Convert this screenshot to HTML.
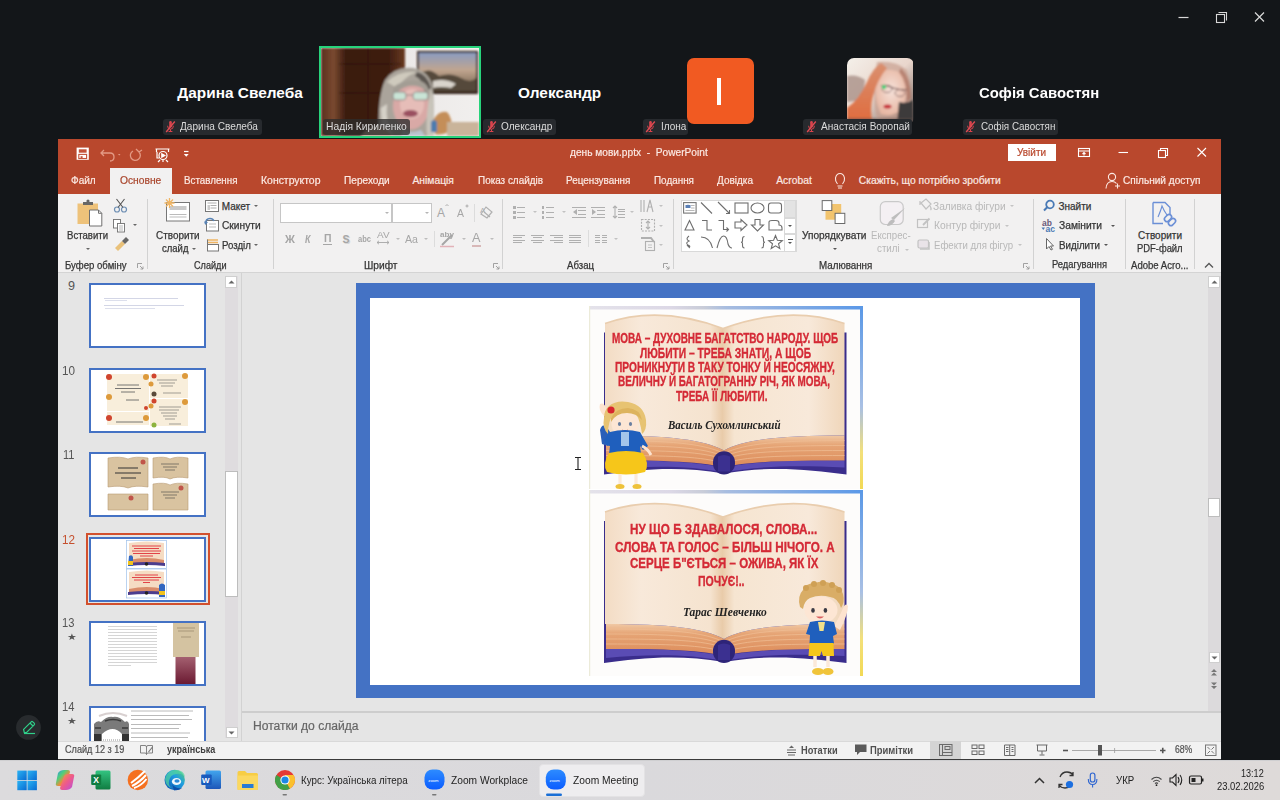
<!DOCTYPE html><html><head><meta charset="utf-8"><style>
*{margin:0;padding:0;box-sizing:border-box}
html,body{width:1280px;height:800px;overflow:hidden;background:#131619;font-family:"Liberation Sans",sans-serif}
.a{position:absolute}
.t{position:absolute;white-space:pre;line-height:1}
svg{position:absolute;overflow:visible}
</style></head><body>
<svg style="left:1170px;top:5px" width="110" height="26">
  <line x1="8.5" y1="12.5" x2="18.5" y2="12.5" stroke="#d8d8d8" stroke-width="1.2"/>
  <rect x="46.5" y="9.5" width="8" height="8" fill="none" stroke="#d8d8d8" stroke-width="1.1"/>
  <path d="M48.5 7.5 H56.5 V15.5" fill="none" stroke="#d8d8d8" stroke-width="1.1"/>
  <path d="M85 7.5 L94 16.5 M94 7.5 L85 16.5" stroke="#d8d8d8" stroke-width="1.2"/>
</svg>
<div class="t" style="left:177.30px;top:85.26px;font-size:15.4px;color:#ffffff;font-weight:bold;font-style:normal;">Дарина Свелеба</div>
<div class="t" style="left:518.00px;top:85.26px;font-size:15.4px;color:#ffffff;font-weight:bold;font-style:normal;">Олександр</div>
<div class="t" style="left:979.40px;top:85.26px;font-size:15.4px;color:#ffffff;font-weight:bold;font-style:normal;transform:scaleX(0.968);transform-origin:0 0;">Софія Савостян</div>
<div class="a" style="left:319px;top:46px;width:162px;height:92px;border:2px solid #27d37b;overflow:hidden;background:#e9e6e4">
 <svg width="158" height="88" viewBox="0 0 158 88" style="left:0;top:0">
  <defs>
   <linearGradient id="wood" x1="0" x2="1"><stop offset="0" stop-color="#5a3020"/><stop offset="0.15" stop-color="#7a4a30"/><stop offset="0.3" stop-color="#3a1a0e"/><stop offset="0.8" stop-color="#3d1d10"/><stop offset="1" stop-color="#6a3a22"/></linearGradient>
   <linearGradient id="wall" x1="0" x2="1"><stop offset="0" stop-color="#e6e2e0"/><stop offset="1" stop-color="#f1efee"/></linearGradient>
   <filter id="bl2" x="-5%" y="-5%" width="110%" height="110%"><feGaussianBlur stdDeviation="0.9"/></filter>
   <linearGradient id="paint" x1="0" y1="0" x2="0" y2="1"><stop offset="0" stop-color="#8b9cc0"/><stop offset="0.45" stop-color="#c0a58f"/><stop offset="1" stop-color="#6a5a45"/></linearGradient>
  </defs>
  <rect x="0" y="0" width="158" height="88" fill="url(#wall)"/>
  <g filter="url(#bl2)">
  <rect x="0" y="0" width="84" height="88" fill="url(#wood)"/>
  <path d="M47 0 V72 M18 16 H80 M18 45 H80" stroke="#24110a" stroke-width="1" opacity="0.6"/>
  <rect x="96" y="3" width="61" height="43" fill="#3a2a20"/>
  <rect x="98" y="5" width="57" height="38" fill="url(#paint)"/>
  <path d="M98 26 Q108 18 118 28 Q130 24 140 30 T155 30 V43 H98Z" fill="#54483a"/>
  <path d="M112 33 Q125 30 135 36 L130 40 Q120 38 112 40Z" fill="#d9d4cc"/>
  <path d="M58 88 Q56 50 64 32 Q74 18 92 20 Q106 22 111 36 Q114 54 112 88Z" fill="#aaa49b"/>
  <path d="M66 34 Q78 22 96 24 Q84 28 76 40Z" fill="#cfcabd"/>
  <path d="M96 24 Q106 26 110 40 L104 44 Q102 32 94 28Z" fill="#5a5550"/>
  <path d="M60 60 Q60 80 66 88 H72 Q64 74 66 56Z" fill="#d6d2c8"/>
  <path d="M40 88 Q50 76 62 78 L72 88Z" fill="#b49c84"/>
  <ellipse cx="90" cy="58" rx="18" ry="23.5" fill="#d9a9a6"/>
  <ellipse cx="91" cy="56" rx="12" ry="15" fill="#e6bdb8"/>
  <path d="M72 40 Q82 30 100 33 Q108 36 108 46 Q100 36 88 38 Q78 40 72 50Z" fill="#a39d94"/>
  <rect x="72" y="44" width="13" height="8" rx="3" fill="#c9e4d6" stroke="#8a8080" stroke-width="0.9"/>
  <rect x="92" y="44" width="15" height="8" rx="3" fill="#c9e4d6" stroke="#8a8080" stroke-width="0.9"/>
  <path d="M85 47 H92" stroke="#8a8080" stroke-width="0.9"/>
  <ellipse cx="89.5" cy="65.5" rx="7.5" ry="3.5" fill="#9a5060"/>
  <path d="M82 82 Q90 86 100 82 L104 88 H80Z" fill="#b9c4cf"/>
  <path d="M106 88 Q104 70 110 40 Q114 60 113 88Z" fill="#c8c4ba"/>
  <path d="M112 72 Q118 62 126 64 Q132 70 130 82 Q122 88 114 86Z" fill="#c48e58"/>
  <path d="M110 74 Q113 70 116 74 L116 84 L110 84Z" fill="#4e7cae"/>
  <rect x="126" y="74" width="32" height="14" fill="#c9b49a"/>
  </g>
 </svg></div>
<div class="a" style="left:322.7px;top:118.5px;width:87.30000000000001px;height:16.0px;background:rgba(45,45,45,0.78);border-radius:3px"></div><div class="t" style="left:325.50px;top:121.90px;font-size:10.4px;color:#dcdcdc;font-weight:normal;font-style:normal;transform:scaleX(0.989);transform-origin:0 0;">Надія Кириленко</div>
<div class="a" style="left:162.7px;top:118.5px;width:99.30000000000001px;height:16.0px;background:#272a2e;border-radius:3px"></div><svg style="left:164.2px;top:120.0px" width="13" height="13" viewBox="0 0 13 13"><path d="M5.2 2.2 Q5.2 1 6.5 1 Q7.8 1 7.8 2.2 V6.3 Q7.8 7.6 6.5 7.6 Q5.2 7.6 5.2 6.3 Z" fill="#d9434c"/><path d="M3.6 5.8 Q3.6 9.2 6.5 9.2 Q9.4 9.2 9.4 5.8 M6.5 9.2 V11.5 M4.6 11.5 H8.4" fill="none" stroke="#d9434c" stroke-width="1"/><line x1="2.2" y1="12" x2="10.8" y2="1.5" stroke="#e04a52" stroke-width="1.4"/></svg><div class="t" style="left:180.30px;top:121.90px;font-size:10.4px;color:#dcdcdc;font-weight:normal;font-style:normal;transform:scaleX(0.970);transform-origin:0 0;">Дарина Свелеба</div>
<div class="a" style="left:483.4px;top:118.5px;width:72.20000000000005px;height:16.0px;background:#272a2e;border-radius:3px"></div><svg style="left:484.9px;top:120.0px" width="13" height="13" viewBox="0 0 13 13"><path d="M5.2 2.2 Q5.2 1 6.5 1 Q7.8 1 7.8 2.2 V6.3 Q7.8 7.6 6.5 7.6 Q5.2 7.6 5.2 6.3 Z" fill="#d9434c"/><path d="M3.6 5.8 Q3.6 9.2 6.5 9.2 Q9.4 9.2 9.4 5.8 M6.5 9.2 V11.5 M4.6 11.5 H8.4" fill="none" stroke="#d9434c" stroke-width="1"/><line x1="2.2" y1="12" x2="10.8" y2="1.5" stroke="#e04a52" stroke-width="1.4"/></svg><div class="t" style="left:500.90px;top:121.90px;font-size:10.4px;color:#dcdcdc;font-weight:normal;font-style:normal;transform:scaleX(0.968);transform-origin:0 0;">Олександр</div>
<div class="a" style="left:687px;top:58.3px;width:67px;height:66px;background:#f15a22;border-radius:7px"></div>
<div class="a" style="left:717.4px;top:78.4px;width:3.4px;height:26.3px;background:#fff"></div>
<div class="a" style="left:642.8px;top:118.5px;width:45.60000000000002px;height:16.0px;background:#272a2e;border-radius:3px"></div><svg style="left:644.3px;top:120.0px" width="13" height="13" viewBox="0 0 13 13"><path d="M5.2 2.2 Q5.2 1 6.5 1 Q7.8 1 7.8 2.2 V6.3 Q7.8 7.6 6.5 7.6 Q5.2 7.6 5.2 6.3 Z" fill="#d9434c"/><path d="M3.6 5.8 Q3.6 9.2 6.5 9.2 Q9.4 9.2 9.4 5.8 M6.5 9.2 V11.5 M4.6 11.5 H8.4" fill="none" stroke="#d9434c" stroke-width="1"/><line x1="2.2" y1="12" x2="10.8" y2="1.5" stroke="#e04a52" stroke-width="1.4"/></svg><div class="t" style="left:660.60px;top:121.90px;font-size:10.4px;color:#dcdcdc;font-weight:normal;font-style:normal;transform:scaleX(0.962);transform-origin:0 0;">Ілона</div>
<div class="a" style="left:847px;top:58.3px;width:66.5px;height:66px;border-radius:7px;overflow:hidden">
 <svg width="66" height="66" viewBox="0 0 66 66" style="left:0;top:0">
  <defs>
   <linearGradient id="ph" x1="0" y1="0" x2="1" y2="1"><stop offset="0" stop-color="#f4f0ea"/><stop offset="0.5" stop-color="#e9d6cc"/><stop offset="1" stop-color="#6a5a55"/></linearGradient>
   <radialGradient id="face" cx="0.5" cy="0.45" r="0.55"><stop offset="0" stop-color="#f6e2da"/><stop offset="1" stop-color="#e8b8a4"/></radialGradient>
   <linearGradient id="hair" x1="0" y1="0" x2="0" y2="1"><stop offset="0" stop-color="#d99070"/><stop offset="1" stop-color="#e06a3c"/></linearGradient>
   <filter id="bl1" x="-10%" y="-10%" width="120%" height="120%"><feGaussianBlur stdDeviation="1.3"/></filter>
  </defs>
  <rect width="66" height="66" fill="url(#ph)"/>
  <g filter="url(#bl1)">
  <path d="M0 18 Q10 16 18 22 L16 42 L0 44Z" fill="#a99088" opacity="0.8"/>
  <path d="M30 4 Q48 2 60 12 Q66 30 62 52 L52 62 Q40 66 30 60 Q24 40 30 4Z" fill="#c9a090" opacity="0.7"/>
  <path d="M30 14 Q46 8 58 18 Q62 34 56 50 Q46 60 34 56 Q26 40 30 14Z" fill="url(#face)"/>
  <path d="M34 5 Q26 10 20 24 Q12 42 0 50 V66 H26 Q22 52 26 38 Q30 22 40 10Z" fill="url(#hair)"/>
  <path d="M54 10 Q64 20 64 40 L60 44 Q60 24 52 14Z" fill="#b07868" opacity="0.8"/>
  <path d="M52 44 Q60 46 66 42 V66 H50Z" fill="#3e3a3a"/>
  <path d="M34 28 Q40 26 46 30 Q52 32 60 32" stroke="#6a4a4a" stroke-width="1.1" fill="none"/>
  <ellipse cx="40" cy="31" rx="5" ry="3.5" fill="none" stroke="#7a5a5a" stroke-width="0.8"/>
  <ellipse cx="53" cy="35" rx="5" ry="3.5" fill="none" stroke="#7a5a5a" stroke-width="0.8"/>
  <circle cx="37" cy="29" r="2.2" fill="#3fd27a"/>
  <ellipse cx="40.5" cy="48.5" rx="4" ry="2" fill="#c62a36"/>
  <rect x="0" y="60" width="66" height="6" fill="#5a4a48" opacity="0.5"/>
  </g>
 </svg></div>
<div class="a" style="left:803px;top:118.5px;width:109.39999999999998px;height:16.0px;background:#272a2e;border-radius:3px"></div><svg style="left:804.5px;top:120.0px" width="13" height="13" viewBox="0 0 13 13"><path d="M5.2 2.2 Q5.2 1 6.5 1 Q7.8 1 7.8 2.2 V6.3 Q7.8 7.6 6.5 7.6 Q5.2 7.6 5.2 6.3 Z" fill="#d9434c"/><path d="M3.6 5.8 Q3.6 9.2 6.5 9.2 Q9.4 9.2 9.4 5.8 M6.5 9.2 V11.5 M4.6 11.5 H8.4" fill="none" stroke="#d9434c" stroke-width="1"/><line x1="2.2" y1="12" x2="10.8" y2="1.5" stroke="#e04a52" stroke-width="1.4"/></svg><div class="t" style="left:820.50px;top:121.90px;font-size:10.4px;color:#dcdcdc;font-weight:normal;font-style:normal;transform:scaleX(0.971);transform-origin:0 0;">Анастасія Воропай</div>
<div class="a" style="left:962.5px;top:118.5px;width:95.5px;height:16.0px;background:#272a2e;border-radius:3px"></div><svg style="left:964.0px;top:120.0px" width="13" height="13" viewBox="0 0 13 13"><path d="M5.2 2.2 Q5.2 1 6.5 1 Q7.8 1 7.8 2.2 V6.3 Q7.8 7.6 6.5 7.6 Q5.2 7.6 5.2 6.3 Z" fill="#d9434c"/><path d="M3.6 5.8 Q3.6 9.2 6.5 9.2 Q9.4 9.2 9.4 5.8 M6.5 9.2 V11.5 M4.6 11.5 H8.4" fill="none" stroke="#d9434c" stroke-width="1"/><line x1="2.2" y1="12" x2="10.8" y2="1.5" stroke="#e04a52" stroke-width="1.4"/></svg><div class="t" style="left:980.60px;top:121.90px;font-size:10.4px;color:#dcdcdc;font-weight:normal;font-style:normal;transform:scaleX(0.946);transform-origin:0 0;">Софія Савостян</div>
<svg style="left:14px;top:713px" width="30" height="30">
 <circle cx="14.5" cy="14.4" r="12.4" fill="#282b2e"/>
 <path d="M10.3 19.6 L9.6 16.4 L17.2 8.8 Q18 8 18.8 8.8 L20.2 10.2 Q21 11 20.2 11.8 L12.6 19.4Z M16 10 L19 13" fill="none" stroke="#2fd08a" stroke-width="1.2"/>
 <path d="M10 20.5 H21" stroke="#2fd08a" stroke-width="1.2"/>
</svg>
<div class="a" style="left:58px;top:139px;width:1163px;height:620px;background:#e5e5e5"></div>
<div class="a" style="left:58px;top:139px;width:1163px;height:54.5px;background:#b9482d"></div>
<svg style="left:70px;top:143px" width="130" height="22">
 <rect x="6.6" y="4.6" width="12.2" height="12.2" fill="#fff"/>
 <rect x="8.8" y="6.3" width="7.8" height="3.4" fill="#c4533a"/>
 <rect x="8.8" y="11.4" width="7.8" height="4.1" fill="#fff" stroke="#c4533a" stroke-width="1.1"/>
 <rect x="10.6" y="13.2" width="2" height="2.3" fill="#c4533a"/>
 <g fill="none" stroke="#e39a85" stroke-width="1.3">
  <path d="M34 7 L31 10 L34 13 M31 10 H40 Q44 10 44 14 Q44 18 40 18"/>
 </g>
 <path d="M48 11 l2.5 0 l-1.25 1.5z" fill="#e39a85"/>
 <g fill="none" stroke="#e39a85" stroke-width="1.3"><path d="M63 8 A5 5 0 1 0 69 9 M66 6 L69 9 L72 7"/></g>
 <g fill="none" stroke="#fff" stroke-width="1.2">
  <path d="M85.5 6 H99.5 M86.5 6 V9 M98.5 6 V9"/>
  <circle cx="93" cy="12.5" r="4"/><path d="M91.8 10.8 V14.2 L94.8 12.5Z" fill="#fff"/>
  <path d="M87 9 V15 H89 M90 17 L88 19 M96 17 L98 19 M93 17 V19"/>
 </g>
 <path d="M114 8.5 H118.5" stroke="#fff" stroke-width="1.2"/><path d="M113.8 11 H118.7 L116.25 13.8Z" fill="#fff"/>
</svg>
<div class="t" style="left:569.75px;top:147.29px;font-size:11px;color:#fbe9e3;font-weight:normal;font-style:normal;transform:scaleX(0.924);transform-origin:0 0;-webkit-text-stroke:0.2px #fbe9e3;">день мови.pptx  -  PowerPoint</div>
<div class="a" style="left:1008px;top:144.2px;width:48px;height:16.5px;background:#fff"></div>
<div class="t" style="left:1017.30px;top:147.58px;font-size:10.3px;color:#b9482d;font-weight:normal;font-style:normal;transform:scaleX(0.971);transform-origin:0 0;-webkit-text-stroke:0.2px #b9482d;">Увійти</div>
<svg style="left:1070px;top:143px" width="150" height="20">
 <g fill="none" stroke="#fff" stroke-width="1.1">
  <rect x="8.5" y="5.5" width="11" height="8"/><path d="M8.5 8 H19.5 M14 10 V12.5 M12.5 11 L14 9.5 L15.5 11"/>
  <path d="M48.5 9.5 H58"/>
  <rect x="88.5" y="7.5" width="7" height="7"/><path d="M90.5 7.5 V5.5 H97.5 V12.5 H95.5"/>
  <path d="M127.5 5 L136 13.5 M136 5 L127.5 13.5"/>
 </g></svg>
<div class="a" style="left:110px;top:168px;width:62px;height:25.5px;background:#f2f1f1"></div>
<div class="t" style="left:70.90px;top:176.18px;font-size:10.3px;color:#fbe9e3;font-weight:normal;font-style:normal;transform:scaleX(0.975);transform-origin:0 0;-webkit-text-stroke:0.2px #fbe9e3;">Файл</div>
<div class="t" style="left:120.00px;top:176.18px;font-size:10.3px;color:#a9452c;font-weight:normal;font-style:normal;transform:scaleX(0.995);transform-origin:0 0;-webkit-text-stroke:0.2px #a9452c;">Основне</div>
<div class="t" style="left:184.20px;top:176.18px;font-size:10.3px;color:#fbe9e3;font-weight:normal;font-style:normal;transform:scaleX(0.950);transform-origin:0 0;-webkit-text-stroke:0.2px #fbe9e3;">Вставлення</div>
<div class="t" style="left:260.50px;top:176.18px;font-size:10.3px;color:#fbe9e3;font-weight:normal;font-style:normal;transform:scaleX(1.013);transform-origin:0 0;-webkit-text-stroke:0.2px #fbe9e3;">Конструктор</div>
<div class="t" style="left:343.50px;top:176.18px;font-size:10.3px;color:#fbe9e3;font-weight:normal;font-style:normal;transform:scaleX(0.981);transform-origin:0 0;-webkit-text-stroke:0.2px #fbe9e3;">Переходи</div>
<div class="t" style="left:412.50px;top:176.18px;font-size:10.3px;color:#fbe9e3;font-weight:normal;font-style:normal;-webkit-text-stroke:0.2px #fbe9e3;">Анімація</div>
<div class="t" style="left:477.50px;top:176.18px;font-size:10.3px;color:#fbe9e3;font-weight:normal;font-style:normal;transform:scaleX(0.963);transform-origin:0 0;-webkit-text-stroke:0.2px #fbe9e3;">Показ слайдів</div>
<div class="t" style="left:565.50px;top:176.18px;font-size:10.3px;color:#fbe9e3;font-weight:normal;font-style:normal;transform:scaleX(0.960);transform-origin:0 0;-webkit-text-stroke:0.2px #fbe9e3;">Рецензування</div>
<div class="t" style="left:653.75px;top:176.18px;font-size:10.3px;color:#fbe9e3;font-weight:normal;font-style:normal;transform:scaleX(0.961);transform-origin:0 0;-webkit-text-stroke:0.2px #fbe9e3;">Подання</div>
<div class="t" style="left:717.00px;top:176.18px;font-size:10.3px;color:#fbe9e3;font-weight:normal;font-style:normal;transform:scaleX(0.971);transform-origin:0 0;-webkit-text-stroke:0.2px #fbe9e3;">Довідка</div>
<div class="t" style="left:776.25px;top:176.18px;font-size:10.3px;color:#fbe9e3;font-weight:normal;font-style:normal;-webkit-text-stroke:0.2px #fbe9e3;">Acrobat</div>
<div class="t" style="left:858.75px;top:176.18px;font-size:10.3px;color:#fbe9e3;font-weight:normal;font-style:normal;-webkit-text-stroke:0.2px #fbe9e3;">Скажіть, що потрібно зробити</div>
<div class="t" style="left:1123.00px;top:176.18px;font-size:10.3px;color:#fbe9e3;font-weight:normal;font-style:normal;transform:scaleX(0.980);transform-origin:0 0;-webkit-text-stroke:0.2px #fbe9e3;">Спільний доступ</div>
<svg style="left:830px;top:170px" width="300" height="22">
 <g fill="none" stroke="#fbe9e3" stroke-width="1.1">
  <path d="M7.5 16 H12.5 M8 18 H12 M7.5 14 Q5 11 5.5 8 Q6.5 3.5 10 3.5 Q13.5 3.5 14.5 8 Q15 11 12.5 14"/>
  <circle cx="282" cy="7" r="3.6"/><path d="M276 18.5 Q276.5 11.5 282 11.5 Q285 11.5 286.5 13.5 M285 16 H290 M287.5 13.5 V18.5"/>
 </g></svg>
<div class="a" style="left:58px;top:193.5px;width:1163px;height:78.5px;background:#f2f1f1"></div>
<div class="a" style="left:58px;top:272px;width:1163px;height:1px;background:#d4d4d4"></div>
<div class="a" style="left:146.5px;top:199px;width:1px;height:70px;background:#d2d2d2"></div>
<div class="a" style="left:272.8px;top:199px;width:1px;height:70px;background:#d2d2d2"></div>
<div class="a" style="left:501.8px;top:199px;width:1px;height:70px;background:#d2d2d2"></div>
<div class="a" style="left:672.6px;top:199px;width:1px;height:70px;background:#d2d2d2"></div>
<div class="a" style="left:1032.5px;top:199px;width:1px;height:70px;background:#d2d2d2"></div>
<div class="a" style="left:1125.3px;top:199px;width:1px;height:70px;background:#d2d2d2"></div>
<div class="a" style="left:1194.4px;top:199px;width:1px;height:70px;background:#d2d2d2"></div>
<div class="t" style="left:67.00px;top:231.13px;font-size:10px;color:#363636;font-weight:normal;font-style:normal;transform:scaleX(0.959);transform-origin:0 0;-webkit-text-stroke:0.25px #363636;">Вставити</div>
<div class="t" style="left:64.50px;top:260.54px;font-size:10px;color:#363636;font-weight:normal;font-style:normal;transform:scaleX(0.960);transform-origin:0 0;-webkit-text-stroke:0.25px #363636;">Буфер обміну</div>
<div class="t" style="left:156.20px;top:231.13px;font-size:10px;color:#363636;font-weight:normal;font-style:normal;transform:scaleX(0.993);transform-origin:0 0;-webkit-text-stroke:0.25px #363636;">Створити</div>
<div class="t" style="left:161.70px;top:244.34px;font-size:10px;color:#363636;font-weight:normal;font-style:normal;transform:scaleX(0.950);transform-origin:0 0;-webkit-text-stroke:0.25px #363636;">слайд</div>
<div class="t" style="left:221.70px;top:201.74px;font-size:10px;color:#363636;font-weight:normal;font-style:normal;-webkit-text-stroke:0.25px #363636;">Макет</div>
<div class="t" style="left:221.70px;top:221.34px;font-size:10px;color:#363636;font-weight:normal;font-style:normal;transform:scaleX(1.020);transform-origin:0 0;-webkit-text-stroke:0.25px #363636;">Скинути</div>
<div class="t" style="left:221.70px;top:240.84px;font-size:10px;color:#363636;font-weight:normal;font-style:normal;transform:scaleX(0.965);transform-origin:0 0;-webkit-text-stroke:0.25px #363636;">Розділ</div>
<div class="t" style="left:193.70px;top:260.63px;font-size:10px;color:#363636;font-weight:normal;font-style:normal;transform:scaleX(0.912);transform-origin:0 0;-webkit-text-stroke:0.25px #363636;">Слайди</div>
<div class="t" style="left:364.00px;top:260.54px;font-size:10px;color:#363636;font-weight:normal;font-style:normal;transform:scaleX(1.018);transform-origin:0 0;-webkit-text-stroke:0.25px #363636;">Шрифт</div>
<div class="t" style="left:566.50px;top:260.54px;font-size:10px;color:#363636;font-weight:normal;font-style:normal;transform:scaleX(0.963);transform-origin:0 0;-webkit-text-stroke:0.25px #363636;">Абзац</div>
<div class="t" style="left:801.60px;top:231.13px;font-size:10px;color:#363636;font-weight:normal;font-style:normal;transform:scaleX(1.011);transform-origin:0 0;-webkit-text-stroke:0.25px #363636;">Упорядкувати</div>
<div class="t" style="left:871.20px;top:231.13px;font-size:10px;color:#b8b8b8;font-weight:normal;font-style:normal;transform:scaleX(0.965);transform-origin:0 0;">Експрес-</div>
<div class="t" style="left:877.30px;top:243.84px;font-size:10px;color:#b8b8b8;font-weight:normal;font-style:normal;transform:scaleX(0.978);transform-origin:0 0;">стилі</div>
<div class="t" style="left:818.90px;top:260.63px;font-size:10px;color:#363636;font-weight:normal;font-style:normal;transform:scaleX(0.977);transform-origin:0 0;-webkit-text-stroke:0.25px #363636;">Малювання</div>
<div class="t" style="left:933.40px;top:201.74px;font-size:10px;color:#b8b8b8;font-weight:normal;font-style:normal;transform:scaleX(1.017);transform-origin:0 0;">Заливка фігури</div>
<div class="t" style="left:933.90px;top:221.34px;font-size:10px;color:#b8b8b8;font-weight:normal;font-style:normal;transform:scaleX(1.024);transform-origin:0 0;">Контур фігури</div>
<div class="t" style="left:933.90px;top:240.84px;font-size:10px;color:#b8b8b8;font-weight:normal;font-style:normal;transform:scaleX(0.962);transform-origin:0 0;">Ефекти для фігур</div>
<div class="t" style="left:1058.50px;top:201.74px;font-size:10px;color:#363636;font-weight:normal;font-style:normal;-webkit-text-stroke:0.25px #363636;">Знайти</div>
<div class="t" style="left:1058.50px;top:221.13px;font-size:10px;color:#363636;font-weight:normal;font-style:normal;transform:scaleX(1.025);transform-origin:0 0;-webkit-text-stroke:0.25px #363636;">Замінити</div>
<div class="t" style="left:1059.00px;top:240.94px;font-size:10px;color:#363636;font-weight:normal;font-style:normal;transform:scaleX(0.979);transform-origin:0 0;-webkit-text-stroke:0.25px #363636;">Виділити</div>
<div class="t" style="left:1052.00px;top:260.33px;font-size:10px;color:#363636;font-weight:normal;font-style:normal;transform:scaleX(0.935);transform-origin:0 0;-webkit-text-stroke:0.25px #363636;">Редагування</div>
<div class="t" style="left:1138.10px;top:230.84px;font-size:10px;color:#363636;font-weight:normal;font-style:normal;-webkit-text-stroke:0.25px #363636;">Створити</div>
<div class="t" style="left:1136.90px;top:244.24px;font-size:10px;color:#363636;font-weight:normal;font-style:normal;transform:scaleX(0.939);transform-origin:0 0;-webkit-text-stroke:0.25px #363636;">PDF-файл</div>
<div class="t" style="left:1130.60px;top:260.63px;font-size:10px;color:#363636;font-weight:normal;font-style:normal;transform:scaleX(0.958);transform-origin:0 0;-webkit-text-stroke:0.25px #363636;">Adobe Acro...</div>
<div class="a" style="left:85.5px;top:247.5px;width:0;height:0;border-left:2.0px solid transparent;border-right:2.0px solid transparent;border-top:2.0px solid #666"></div>
<div class="a" style="left:132.5px;top:224px;width:0;height:0;border-left:2.0px solid transparent;border-right:2.0px solid transparent;border-top:2.0px solid #666"></div>
<div class="a" style="left:191.7px;top:247.5px;width:0;height:0;border-left:2.0px solid transparent;border-right:2.0px solid transparent;border-top:2.0px solid #666"></div>
<div class="a" style="left:253.7px;top:205px;width:0;height:0;border-left:2.0px solid transparent;border-right:2.0px solid transparent;border-top:2.0px solid #666"></div>
<div class="a" style="left:254.2px;top:244px;width:0;height:0;border-left:2.0px solid transparent;border-right:2.0px solid transparent;border-top:2.0px solid #666"></div>
<div class="a" style="left:833px;top:247.5px;width:0;height:0;border-left:2.0px solid transparent;border-right:2.0px solid transparent;border-top:2.0px solid #555"></div>
<div class="a" style="left:905px;top:249px;width:0;height:0;border-left:2.0px solid transparent;border-right:2.0px solid transparent;border-top:2.0px solid #c4c4c4"></div>
<div class="a" style="left:1010px;top:205px;width:0;height:0;border-left:2.0px solid transparent;border-right:2.0px solid transparent;border-top:2.0px solid #c4c4c4"></div>
<div class="a" style="left:1005px;top:224.5px;width:0;height:0;border-left:2.0px solid transparent;border-right:2.0px solid transparent;border-top:2.0px solid #c4c4c4"></div>
<div class="a" style="left:1018.2px;top:244px;width:0;height:0;border-left:2.0px solid transparent;border-right:2.0px solid transparent;border-top:2.0px solid #c4c4c4"></div>
<div class="a" style="left:1111px;top:224.5px;width:0;height:0;border-left:2.0px solid transparent;border-right:2.0px solid transparent;border-top:2.0px solid #555"></div>
<div class="a" style="left:1103.5px;top:244px;width:0;height:0;border-left:2.0px solid transparent;border-right:2.0px solid transparent;border-top:2.0px solid #555"></div>
<svg style="left:60px;top:195px" width="90" height="60">
 <path d="M17.5 8.5 H38 V29 H17.5Z" fill="#eec27a"/>
 <path d="M23 7 H33 V10 H23Z" fill="#666"/><circle cx="28" cy="6" r="1.6" fill="#666"/>
 <path d="M29.5 15 H38.5 L41.8 18.3 V31 H29.5Z" fill="#fff" stroke="#707070" stroke-width="1"/>
 <path d="M38.5 15 V18.3 H41.8" fill="none" stroke="#707070" stroke-width="1"/>
 <g fill="none" stroke="#6e8fb4" stroke-width="1.2"><circle cx="57" cy="14.5" r="2.5"/><circle cx="64" cy="14.5" r="2.5"/></g>
 <path d="M58 12.5 L64.5 4 M63 12.5 L56.5 4" stroke="#555" stroke-width="1.1"/>
 <g fill="#fff" stroke="#707070" stroke-width="0.9"><rect x="53.5" y="24.5" width="7" height="8.5"/><rect x="57.5" y="28.5" width="7" height="8.5"/></g>
 <path d="M59 31 H63 M59 33 H63 M59 35 H63" stroke="#888" stroke-width="0.6"/>
 <path d="M55 53 L62 46 L65 49 L58 56Z" fill="#e9c17a"/><path d="M62 46 L66 42 L69 45 L65 49Z" fill="#666"/>
</svg>
<svg style="left:160px;top:195px" width="115" height="60">
 <rect x="6.5" y="7.5" width="23" height="18.5" fill="#fff" stroke="#777" stroke-width="1"/>
 <rect x="9.5" y="11" width="17" height="4" fill="#c9c9c9"/>
 <path d="M9.5 19.5 H26.5 M9.5 22 H26.5" stroke="#aaa" stroke-width="0.8"/>
 <path d="M9.5 3 V13 M4.5 8 H14.5 M6 4.5 L13 11.5 M13 4.5 L6 11.5" stroke="#f0b563" stroke-width="1.3"/>
 <rect x="45.5" y="5.5" width="13" height="11" fill="#fff" stroke="#777" stroke-width="1"/>
 <path d="M47.5 8 H56.5 M50.5 10.5 H56.5 M50.5 13 H56.5" stroke="#999" stroke-width="0.8"/><rect x="47.5" y="10" width="2.5" height="5" fill="#ccc"/>
 <rect x="46.5" y="25.5" width="12" height="10.5" fill="#fff" stroke="#777" stroke-width="1"/>
 <path d="M49 29 H56 M49 32 H56" stroke="#aaa" stroke-width="0.8"/>
 <path d="M45.5 29 Q45.5 23.5 50 23.5 Q53 23.5 54 26" fill="none" stroke="#5a84b5" stroke-width="1.5"/><path d="M44 26.5 L45.5 30 L48 27" fill="#5a84b5"/>
 <path d="M47 45 H58 M47 47.5 H58" stroke="#f0b563" stroke-width="1.3"/>
 <rect x="47.5" y="49.5" width="11" height="6.5" fill="#fff" stroke="#777" stroke-width="1"/>
 <path d="M47.5 44.5 V56" stroke="#777" stroke-width="1"/>
</svg>
<div class="a" style="left:280.2px;top:203px;width:112.3px;height:19.8px;background:#fff;border:1px solid #c6c6c6"></div>
<div class="a" style="left:391.5px;top:203px;width:40.3px;height:19.8px;background:#fff;border:1px solid #c6c6c6"></div>
<div class="a" style="left:473.5px;top:204px;width:1px;height:18px;background:#dcdcdc"></div>
<div class="a" style="left:385px;top:212px;width:0;height:0;border-left:2.0px solid transparent;border-right:2.0px solid transparent;border-top:2.0px solid #b5b5b5"></div>
<div class="a" style="left:424.5px;top:212px;width:0;height:0;border-left:2.0px solid transparent;border-right:2.0px solid transparent;border-top:2.0px solid #b5b5b5"></div>
<div class="a" style="left:434px;top:231px;width:1px;height:16px;background:#dcdcdc"></div>
<div class="t" style="left:284.55px;top:233.61px;font-size:10.5px;color:#a6a6a6;font-weight:bold;font-style:normal;transform:scaleX(1.041);transform-origin:0 0;">Ж</div>
<div class="t" style="left:304.50px;top:233.61px;font-size:10.5px;color:#a6a6a6;font-weight:bold;font-style:italic;transform:scaleX(0.847);transform-origin:0 0;">К</div>
<div class="t" style="left:323.50px;top:233.53px;font-size:10px;color:#a6a6a6;font-weight:bold;font-style:normal;transform:scaleX(1.042);transform-origin:0 0;">П</div>
<div class="a" style="left:323px;top:243.5px;width:8.5px;height:1px;background:#a6a6a6"></div>
<div class="t" style="left:343.50px;top:235.11px;font-size:10.5px;color:#d6d6d6;font-weight:bold;font-style:normal;">S</div>
<div class="t" style="left:342.50px;top:234.11px;font-size:10.5px;color:#a6a6a6;font-weight:bold;font-style:normal;">S</div>
<div class="t" style="left:358.00px;top:234.80px;font-size:8.5px;color:#a6a6a6;font-weight:bold;font-style:normal;transform:scaleX(0.887);transform-origin:0 0;">abc</div>
<div class="t" style="left:377.00px;top:231.38px;font-size:9px;color:#a6a6a6;font-weight:normal;font-style:normal;transform:scaleX(1.102);transform-origin:0 0;">AV</div>
<svg style="left:376px;top:240px" width="15" height="6"><path d="M1 2.5 H13 M1 2.5 L3 0.8 M1 2.5 L3 4.2 M13 2.5 L11 0.8 M13 2.5 L11 4.2" stroke="#a6a6a6" stroke-width="0.9" fill="none"/></svg>
<div class="t" style="left:404.50px;top:234.11px;font-size:10.5px;color:#a6a6a6;font-weight:normal;font-style:normal;transform:scaleX(1.011);transform-origin:0 0;">Aa</div>
<div class="t" style="left:437.00px;top:207.34px;font-size:12px;color:#a6a6a6;font-weight:normal;font-style:normal;">A</div>
<div class="t" style="left:457.00px;top:209.03px;font-size:10px;color:#a6a6a6;font-weight:normal;font-style:normal;transform:scaleX(1.045);transform-origin:0 0;">A</div>
<svg style="left:436px;top:203px" width="40" height="10"><path d="M9.5 3 L11 1.5 L12.5 3 M29.5 3 H32.5 M31 1.5 V4.5" stroke="#a6a6a6" stroke-width="0.9" fill="none"/></svg>
<div class="t" style="left:472.00px;top:232.42px;font-size:12.5px;color:#a6a6a6;font-weight:normal;font-style:normal;transform:scaleX(1.015);transform-origin:0 0;">A</div>
<div class="a" style="left:472px;top:244.5px;width:9px;height:2px;background:#d8b8b8"></div>
<div class="t" style="left:440.00px;top:231.23px;font-size:8px;color:#a6a6a6;font-weight:bold;font-style:normal;transform:scaleX(1.014);transform-origin:0 0;">aby</div>
<svg style="left:438px;top:232px" width="20" height="16"><path d="M4 13 L14 3" stroke="#a6a6a6" stroke-width="2" /><path d="M2 14.5 H16" stroke="#e2b2b8" stroke-width="1.5"/></svg>
<div class="a" style="left:395.5px;top:238px;width:0;height:0;border-left:2.0px solid transparent;border-right:2.0px solid transparent;border-top:2.0px solid #bdbdbd"></div>
<div class="a" style="left:423.5px;top:238px;width:0;height:0;border-left:2.0px solid transparent;border-right:2.0px solid transparent;border-top:2.0px solid #bdbdbd"></div>
<div class="a" style="left:461.5px;top:238px;width:0;height:0;border-left:2.0px solid transparent;border-right:2.0px solid transparent;border-top:2.0px solid #bdbdbd"></div>
<div class="a" style="left:490px;top:238px;width:0;height:0;border-left:2.0px solid transparent;border-right:2.0px solid transparent;border-top:2.0px solid #bdbdbd"></div>
<svg style="left:478px;top:204px" width="18" height="16"><path d="M3 10 L8 3 L14 8 L9 14Z M6 8 L12 13" fill="none" stroke="#b0b0b0" stroke-width="1.2"/><text x="2" y="9" font-size="8" fill="#b0b0b0" font-family="Liberation Sans">A</text></svg>
<div class="a" style="left:513px;top:206px;width:2.5px;height:2.5px;background:#b0b0b0"></div>
<div class="a" style="left:513px;top:211px;width:2.5px;height:2.5px;background:#b0b0b0"></div>
<div class="a" style="left:513px;top:216px;width:2.5px;height:2.5px;background:#b0b0b0"></div>
<div class="a" style="left:517px;top:207px;width:7.5px;height:1.2px;background:#b0b0b0"></div><div class="a" style="left:517px;top:212px;width:7.5px;height:1.2px;background:#b0b0b0"></div><div class="a" style="left:517px;top:217px;width:7.5px;height:1.2px;background:#b0b0b0"></div>
<div class="a" style="left:532.5px;top:211px;width:0;height:0;border-left:2.0px solid transparent;border-right:2.0px solid transparent;border-top:2.0px solid #c2c2c2"></div>
<div class="a" style="left:542px;top:205.5px;width:2px;height:3.5px;background:#b0b0b0"></div>
<div class="a" style="left:542px;top:210.5px;width:2px;height:3.5px;background:#b0b0b0"></div>
<div class="a" style="left:542px;top:215.5px;width:2px;height:3.5px;background:#b0b0b0"></div>
<div class="a" style="left:546px;top:207px;width:8px;height:1.2px;background:#b0b0b0"></div><div class="a" style="left:546px;top:212px;width:8px;height:1.2px;background:#b0b0b0"></div><div class="a" style="left:546px;top:217px;width:8px;height:1.2px;background:#b0b0b0"></div>
<div class="a" style="left:561.5px;top:211px;width:0;height:0;border-left:2.0px solid transparent;border-right:2.0px solid transparent;border-top:2.0px solid #c2c2c2"></div>
<div class="a" style="left:572px;top:206.5px;width:14px;height:1.2px;background:#b0b0b0"></div><div class="a" style="left:578px;top:210.1px;width:8px;height:1.2px;background:#b0b0b0"></div><div class="a" style="left:578px;top:213.7px;width:8px;height:1.2px;background:#b0b0b0"></div><div class="a" style="left:572px;top:217.3px;width:14px;height:1.2px;background:#b0b0b0"></div>
<svg style="left:572px;top:208px" width="8" height="8"><path d="M1 4 L5 1 V7Z" fill="#b0b0b0"/></svg>
<div class="a" style="left:591px;top:206.5px;width:14px;height:1.2px;background:#b0b0b0"></div><div class="a" style="left:597px;top:210.1px;width:8px;height:1.2px;background:#b0b0b0"></div><div class="a" style="left:597px;top:213.7px;width:8px;height:1.2px;background:#b0b0b0"></div><div class="a" style="left:591px;top:217.3px;width:14px;height:1.2px;background:#b0b0b0"></div>
<svg style="left:591px;top:208px" width="8" height="8"><path d="M5 4 L1 1 V7Z" fill="#b0b0b0"/></svg>
<div class="a" style="left:618px;top:208.5px;width:7px;height:1.2px;background:#b0b0b0"></div><div class="a" style="left:618px;top:211.3px;width:7px;height:1.2px;background:#b0b0b0"></div><div class="a" style="left:618px;top:214.1px;width:7px;height:1.2px;background:#b0b0b0"></div><div class="a" style="left:618px;top:216.9px;width:7px;height:1.2px;background:#b0b0b0"></div>
<svg style="left:612px;top:205px" width="8" height="15"><path d="M3 1 V13 M1 3 L3 1 L5 3 M1 11 L3 13 L5 11" stroke="#b0b0b0" stroke-width="1.1" fill="none"/></svg>
<div class="a" style="left:630px;top:211px;width:0;height:0;border-left:2.0px solid transparent;border-right:2.0px solid transparent;border-top:2.0px solid #c2c2c2"></div>
<div class="a" style="left:512.5px;top:234.5px;width:12.5px;height:1.2px;background:#b0b0b0"></div><div class="a" style="left:512.5px;top:237.1px;width:9px;height:1.2px;background:#b0b0b0"></div><div class="a" style="left:512.5px;top:239.7px;width:12.5px;height:1.2px;background:#b0b0b0"></div><div class="a" style="left:512.5px;top:242.3px;width:9px;height:1.2px;background:#b0b0b0"></div>
<div class="a" style="left:531px;top:234.5px;width:12.5px;height:1.2px;background:#b0b0b0"></div><div class="a" style="left:533px;top:237.1px;width:8.5px;height:1.2px;background:#b0b0b0"></div><div class="a" style="left:531px;top:239.7px;width:12.5px;height:1.2px;background:#b0b0b0"></div><div class="a" style="left:533px;top:242.3px;width:8.5px;height:1.2px;background:#b0b0b0"></div>
<div class="a" style="left:550px;top:234.5px;width:12.5px;height:1.2px;background:#b0b0b0"></div><div class="a" style="left:553.5px;top:237.1px;width:9.0px;height:1.2px;background:#b0b0b0"></div><div class="a" style="left:550px;top:239.7px;width:12.5px;height:1.2px;background:#b0b0b0"></div><div class="a" style="left:553.5px;top:242.3px;width:9.0px;height:1.2px;background:#b0b0b0"></div>
<div class="a" style="left:568.5px;top:234.5px;width:12.5px;height:1.2px;background:#b0b0b0"></div><div class="a" style="left:568.5px;top:237.1px;width:12.5px;height:1.2px;background:#b0b0b0"></div><div class="a" style="left:568.5px;top:239.7px;width:12.5px;height:1.2px;background:#b0b0b0"></div><div class="a" style="left:568.5px;top:242.3px;width:12.5px;height:1.2px;background:#b0b0b0"></div>
<div class="a" style="left:588px;top:230px;width:1px;height:17px;background:#dcdcdc"></div>
<div class="a" style="left:594.5px;top:234.5px;width:5px;height:1.2px;background:#b0b0b0"></div><div class="a" style="left:594.5px;top:237.1px;width:5px;height:1.2px;background:#b0b0b0"></div><div class="a" style="left:594.5px;top:239.7px;width:5px;height:1.2px;background:#b0b0b0"></div><div class="a" style="left:594.5px;top:242.3px;width:5px;height:1.2px;background:#b0b0b0"></div>
<div class="a" style="left:601.5px;top:234.5px;width:5px;height:1.2px;background:#b0b0b0"></div><div class="a" style="left:601.5px;top:237.1px;width:5px;height:1.2px;background:#b0b0b0"></div><div class="a" style="left:601.5px;top:239.7px;width:5px;height:1.2px;background:#b0b0b0"></div><div class="a" style="left:601.5px;top:242.3px;width:5px;height:1.2px;background:#b0b0b0"></div>
<div class="a" style="left:613.5px;top:238px;width:0;height:0;border-left:2.0px solid transparent;border-right:2.0px solid transparent;border-top:2.0px solid #c2c2c2"></div>
<svg style="left:638px;top:196px" width="20" height="58">
 <g stroke="#b0b0b0" stroke-width="1.1" fill="none">
  <path d="M3 4 V16 M6 4 V16 M9 16 L12 4 L15 16 M10.5 11 H13.5"/>
  <rect x="3.5" y="23.5" width="13" height="11.5" stroke-dasharray="2 1.2"/><path d="M10 25 V33 M8 27 L10 25 L12 27 M8 31 L10 33 L12 31"/>
  <path d="M3 42 H13 L16 46" stroke-width="2"/><rect x="7.5" y="45.5" width="9" height="9"/><path d="M10 49 H14 M10 51.5 H14" stroke-width="0.7"/>
 </g></svg>
<div class="a" style="left:658.5px;top:205px;width:0;height:0;border-left:2.0px solid transparent;border-right:2.0px solid transparent;border-top:2.0px solid #c2c2c2"></div>
<div class="a" style="left:658.5px;top:224.5px;width:0;height:0;border-left:2.0px solid transparent;border-right:2.0px solid transparent;border-top:2.0px solid #c2c2c2"></div>
<div class="a" style="left:658.5px;top:244px;width:0;height:0;border-left:2.0px solid transparent;border-right:2.0px solid transparent;border-top:2.0px solid #c2c2c2"></div>
<svg style="left:137px;top:263px" width="7" height="7"><path d="M0.5 5 V0.5 H5" stroke="#999" stroke-width="0.9" fill="none"/><path d="M3 3 L6 6 M6 3.5 V6 H3.5" stroke="#999" stroke-width="0.9" fill="none"/></svg>
<svg style="left:492.5px;top:263px" width="7" height="7"><path d="M0.5 5 V0.5 H5" stroke="#999" stroke-width="0.9" fill="none"/><path d="M3 3 L6 6 M6 3.5 V6 H3.5" stroke="#999" stroke-width="0.9" fill="none"/></svg>
<svg style="left:662.5px;top:263px" width="7" height="7"><path d="M0.5 5 V0.5 H5" stroke="#999" stroke-width="0.9" fill="none"/><path d="M3 3 L6 6 M6 3.5 V6 H3.5" stroke="#999" stroke-width="0.9" fill="none"/></svg>
<svg style="left:1022.7px;top:263px" width="7" height="7"><path d="M0.5 5 V0.5 H5" stroke="#999" stroke-width="0.9" fill="none"/><path d="M3 3 L6 6 M6 3.5 V6 H3.5" stroke="#999" stroke-width="0.9" fill="none"/></svg>
<div class="a" style="left:680.6px;top:199.6px;width:116px;height:52px;background:#fff;border:1px solid #d9d9d9"></div>
<div class="a" style="left:784.2px;top:199.6px;width:12.2px;height:18px;background:#e3e3e3;border:1px solid #d9d9d9"></div>
<div class="a" style="left:784.2px;top:217.6px;width:12.2px;height:16.5px;background:#fff;border:1px solid #d9d9d9"></div>
<div class="a" style="left:784.2px;top:234px;width:12.2px;height:17.7px;background:#fff;border:1px solid #d9d9d9"></div>
<div class="a" style="left:788.3px;top:224.5px;width:0;height:0;border-left:2.0px solid transparent;border-right:2.0px solid transparent;border-top:2.0px solid #555"></div>
<div class="a" style="left:788px;top:239px;width:5px;height:1px;background:#555"></div>
<div class="a" style="left:788.3px;top:242px;width:0;height:0;border-left:2.0px solid transparent;border-right:2.0px solid transparent;border-top:2.0px solid #555"></div>
<svg style="left:680px;top:199px" width="120" height="55">
 <g fill="none" stroke="#6e6e6e" stroke-width="1.1">
  <rect x="3.6" y="3.6" width="12.5" height="10.5" stroke="#777"/>
  <path d="M21 3.5 L32 14.5"/><path d="M38 3 L49.5 14.5 M46 14.5 H49.5 V11"/>
  <rect x="55" y="4" width="13" height="10"/><ellipse cx="77.5" cy="9" rx="6.5" ry="5"/><rect x="88.5" y="4" width="13" height="10" rx="2.5"/>
  <path d="M5 31 L9.5 21.5 L14 31Z"/><path d="M22 21.5 H27 V31 H32"/><path d="M38.5 21.5 H43.5 V30.5 H48 M46.5 28.5 L48.5 30.5 L46.5 32.5"/>
  <path d="M55 23 H61 V20.5 L67 26 L61 31.5 V29 H55Z"/><path d="M75 20.5 H80 V26 H83.5 L77.5 32 L71.5 26 H75Z"/><path d="M89 23 Q89 21.5 92 21.5 H96 Q99 21.5 99 24 V26 Q102 26 102 29 V31 H89Z"/>
  <path d="M9 37 Q5 40 9 42 Q5 44 8 46 Q11 47 9 49 M7 46 L9.5 48.5"/><path d="M21 38 Q30 38 32.5 49"/><path d="M37 49 Q40 37 43.5 37 Q47 37 48 45 Q49.5 49 52 49"/>
  <path d="M64.5 37.5 Q62.5 37.5 62.5 40 V42 Q62.5 43.3 61 43.3 Q62.5 43.3 62.5 44.6 V46.5 Q62.5 49 64.5 49"/><path d="M81.5 37.5 Q83.5 37.5 83.5 40 V42 Q83.5 43.3 85 43.3 Q83.5 43.3 83.5 44.6 V46.5 Q83.5 49 81.5 49"/>
  <path d="M95.5 36.5 L97.4 41.3 L102.3 41.6 L98.5 44.7 L99.8 49.5 L95.5 46.8 L91.2 49.5 L92.5 44.7 L88.7 41.6 L93.6 41.3Z"/>
 </g>
 <path d="M6 7 L8 5.5 L10 7" fill="#5a7fb5"/><rect x="5.5" y="6" width="5" height="3" fill="#5a7fb5"/><path d="M11 6.5 H14.5 M11 9 H14.5 M5.5 11.5 H14.5" stroke="#999" stroke-width="0.7"/>
</svg>
<svg style="left:820px;top:199px" width="30" height="30">
 <rect x="5.5" y="5" width="15.7" height="15.7" fill="#f2c46e"/>
 <rect x="2.2" y="1.6" width="9.6" height="9.9" fill="#fff" stroke="#6a6a6a" stroke-width="1"/>
 <rect x="15.1" y="14.3" width="9.7" height="10.2" fill="#fff" stroke="#6a6a6a" stroke-width="1"/>
</svg>
<svg style="left:878px;top:199px" width="30" height="30">
 <rect x="2.3" y="2.6" width="22.9" height="22.9" rx="5" fill="#f4f0f3" stroke="#c9c9c9" stroke-width="1.2"/>
 <path d="M27 9 L16 21 L13 19Z" fill="#bdbdbd"/><path d="M15 20 Q10 22 9 27 Q14 27 17 22Z" fill="#bdbdbd"/>
</svg>
<svg style="left:915px;top:197px" width="20" height="55">
 <g fill="none" stroke="#c2c2c2" stroke-width="1.2">
  <path d="M6 6 L11 2 L16 7 L11 12Z M5 8 V4"/><path d="M15 9 Q17 12 15.5 13"/>
  <rect x="2.5" y="22.5" width="10" height="8"/><path d="M8 28 L14.5 21.5" stroke-width="1.8"/>
  <rect x="3" y="43" width="10.5" height="8" rx="1.5" fill="#e9e3e8"/><path d="M5 52 H14 V45" stroke-width="1.5"/>
 </g></svg>
<svg style="left:1040px;top:197px" width="20" height="55">
 <circle cx="10" cy="7.5" r="3.8" fill="none" stroke="#4a7ab5" stroke-width="1.8"/><path d="M7.2 10.3 L4 13.5" stroke="#4a7ab5" stroke-width="2"/>
 <text x="2" y="29" font-size="8.5" font-weight="bold" fill="#6a5a7a" font-family="Liberation Sans">ab</text><text x="5.5" y="35" font-size="8.5" font-weight="bold" fill="#4a7ab5" font-family="Liberation Sans">ac</text>
 <path d="M1.5 30.5 L3.3 33 L5 30.5" fill="#4a7ab5"/>
 <path d="M6.5 41.5 V52 L9 49.5 L11 53 L12.5 52.3 L10.5 49 L13.5 49Z" fill="#fff" stroke="#666" stroke-width="1"/>
</svg>
<svg style="left:1150px;top:200px" width="28" height="30">
 <path d="M3 2.5 H15 L20 7.5 V15 M3 2.5 V23.5 H13" fill="none" stroke="#6b8fd6" stroke-width="1.4"/>
 <path d="M8 17 Q11 10 12 6 Q14 11 17 15" fill="none" stroke="#6b8fd6" stroke-width="1.1"/>
 <g fill="none" stroke="#6b8fd6" stroke-width="1.6"><rect x="15.5" y="14" width="5" height="8" rx="2.5" transform="rotate(45 18 18)"/><rect x="19.5" y="18" width="5" height="8" rx="2.5" transform="rotate(45 22 22)"/></g>
</svg>
<svg style="left:1203px;top:260px" width="12" height="10"><path d="M2 7.5 L6 3.5 L10 7.5" stroke="#555" stroke-width="1.3" fill="none"/></svg>
<div class="a" style="left:240.6px;top:273px;width:1px;height:468px;background:#d2d2d2"></div>
<div class="a" style="left:224.5px;top:276px;width:13px;height:462px;background:#dfdcdf"></div>
<div class="a" style="left:225.3px;top:276px;width:12.2px;height:11.5px;background:#fff;border:1px solid #cfcfcf"></div>
<svg style="left:227px;top:278px" width="9" height="8"><path d="M1.5 5.5 L4.5 2.5 L7.5 5.5Z" fill="#666"/></svg>
<div class="a" style="left:224.6px;top:471.3px;width:13px;height:125.6px;background:#fff;border:1px solid #bdbdbd"></div>
<div class="a" style="left:225.5px;top:727.3px;width:12px;height:11px;background:#fff;border:1px solid #cfcfcf"></div>
<svg style="left:227px;top:729px" width="9" height="8"><path d="M1.5 2.5 L4.5 5.5 L7.5 2.5Z" fill="#666"/></svg>
<div class="t" style="left:68.00px;top:280.33px;font-size:12.6px;color:#555;font-weight:normal;font-style:normal;">9</div>
<div class="t" style="left:62.00px;top:364.93px;font-size:12.6px;color:#555;font-weight:normal;font-style:normal;transform:scaleX(0.930);transform-origin:0 0;">10</div>
<div class="t" style="left:62.50px;top:449.33px;font-size:12.6px;color:#555;font-weight:normal;font-style:normal;transform:scaleX(0.878);transform-origin:0 0;">11</div>
<div class="t" style="left:62.00px;top:533.83px;font-size:12.6px;color:#c5502e;font-weight:normal;font-style:normal;transform:scaleX(0.930);transform-origin:0 0;">12</div>
<div class="t" style="left:62.00px;top:617.03px;font-size:12.6px;color:#555;font-weight:normal;font-style:normal;transform:scaleX(0.887);transform-origin:0 0;">13</div>
<div class="t" style="left:62.00px;top:701.33px;font-size:12.6px;color:#555;font-weight:normal;font-style:normal;transform:scaleX(0.887);transform-origin:0 0;">14</div>
<div class="t" style="left:66.80px;top:632.98px;font-size:9px;color:#555;font-weight:normal;font-style:normal;transform:scaleX(1.215);transform-origin:0 0;">★</div>
<div class="t" style="left:66.80px;top:717.18px;font-size:9px;color:#555;font-weight:normal;font-style:normal;transform:scaleX(1.215);transform-origin:0 0;">★</div>
<div class="a" style="left:85.5px;top:532.8px;width:124.2px;height:72px;border:2.6px solid #d2502d"></div>
<div class="a" style="left:89px;top:283.3px;width:117px;height:65px;background:#fff;border:2px solid #4472c4;overflow:hidden"></div>
<div class="a" style="left:89px;top:367.8px;width:117px;height:65px;background:#fff;border:2px solid #4472c4;overflow:hidden"></div>
<div class="a" style="left:89px;top:452.2px;width:117px;height:65px;background:#fff;border:2px solid #4472c4;overflow:hidden"></div>
<div class="a" style="left:89px;top:536.7px;width:117px;height:65px;background:#fff;border:2px solid #4472c4;overflow:hidden"></div>
<div class="a" style="left:89px;top:621.2px;width:117px;height:65px;background:#fff;border:2px solid #4472c4;overflow:hidden"></div>
<div class="a" style="left:89px;top:705.6px;width:117px;height:35.39999999999998px;background:#fff;border:2px solid #4472c4;border-bottom:none;overflow:hidden"></div>
<div class="a" style="left:104px;top:297.5px;width:74px;height:1px;background:#d3d6e6"></div>
<div class="a" style="left:105px;top:300px;width:22px;height:1px;background:#dcdfec"></div>
<div class="a" style="left:104px;top:305px;width:80px;height:1px;background:#d3d6e6"></div>
<div class="a" style="left:105px;top:307.5px;width:50px;height:1px;background:#dcdfec"></div>
<svg style="left:91px;top:369.8px" width="113" height="61">
 <rect x="16" y="4" width="42" height="37" fill="#f8eedb"/><rect x="16" y="42" width="42" height="13" fill="#f8eedb"/>
 <rect x="59" y="4" width="38" height="24" fill="#f8eedb"/><rect x="59" y="29" width="38" height="27" fill="#f8eedb"/>
 <g fill="#d0452e"><circle cx="18" cy="7" r="3"/><circle cx="18" cy="48" r="3"/><circle cx="63" cy="6" r="2.5"/><circle cx="63" cy="31" r="2.5"/><circle cx="55" cy="38" r="2"/></g>
 <g fill="#dd9a3b"><circle cx="55" cy="7" r="3"/><circle cx="55" cy="48" r="3"/><circle cx="94" cy="6" r="3"/><circle cx="94" cy="32" r="3"/><circle cx="18" cy="27" r="3"/><circle cx="60" cy="14" r="2.5"/><circle cx="60" cy="36" r="2.5"/></g>
 <circle cx="63" cy="55" r="2.5" fill="#8cb33f"/><circle cx="63" cy="24" r="2.5" fill="#5a4a3a"/>
 <g stroke="#666" stroke-width="0.9"><path d="M26 15 H48 M24 18.5 H50 M30 22 H44 M35 30 H48 M25 52 H52"/><path d="M66 10 H86 M68 13 H84 M70 16 H82 M72 23 H90 M68 37 H90 M68 40 H88 M70 43 H86 M72 46 H86 M74 49 H84 M78 54 H90" stroke-width="0.6"/></g>
</svg>
<svg style="left:91px;top:454.2px" width="113" height="61">
 <g fill="#d9c3a0" stroke="#b89a74" stroke-width="0.6"><path d="M17 4 Q30 2 37 5 Q44 2 57 4 V33 Q44 31 37 34 Q30 31 17 33Z"/><path d="M62 4 Q74 2 79 5 Q85 2 97 4 V24 Q85 22 79 25 Q74 22 62 24Z"/><path d="M62 30 Q74 28 79 31 Q85 28 97 30 V56 H62Z"/><path d="M17 40 H57 V56 H17Z"/></g>
 <g stroke="#333" stroke-width="1.2"><path d="M27 14 H47 M24 19 H50 M30 24 H45"/></g>
 <g stroke="#444" stroke-width="0.6"><path d="M70 10 H88 M72 13 H86 M74 16 H84 M70 38 H88 M72 41 H86 M74 44 H84"/></g>
 <circle cx="52" cy="8" r="2.5" fill="#c0554a"/><circle cx="90" cy="34" r="2.5" fill="#c0554a"/><circle cx="40" cy="44" r="2.5" fill="#c0554a"/>
</svg>
<svg style="left:91px;top:538.7px" width="113" height="61">
 <rect x="35.5" y="1.5" width="40" height="28" fill="#fff" stroke="#9fc0ea" stroke-width="0.7"/>
 <rect x="35.5" y="30" width="40" height="29" fill="#fff" stroke="#9fc0ea" stroke-width="0.7"/>
 <path d="M38 4 Q56 1 73 4 V22 H38Z" fill="#f5dcc3"/><path d="M38 33 Q56 30 73 33 V51 H38Z" fill="#f5dcc3"/>
 <path d="M38 21 Q56 17 73 21 V26 Q56 22 38 26Z" fill="#d98c6a"/><path d="M38 50 Q56 46 73 50 V55 Q56 51 38 55Z" fill="#d98c6a"/>
 <path d="M37 24 Q56 22 74 24 V27 Q56 25 37 27Z" fill="#4b3d8e"/><path d="M37 53 Q56 51 74 53 V56 Q56 54 37 56Z" fill="#4b3d8e"/>
 <circle cx="55.5" cy="25" r="1.8" fill="#222"/><circle cx="55.5" cy="54" r="1.8" fill="#222"/>
 <g stroke="#e0303a" stroke-width="0.9"><path d="M41 7 H70 M43 9.5 H68 M41 12 H70 M42 14.5 H69 M49 17 H62 M44 36 H67 M41 38.5 H70 M43 41 H68 M52 43.5 H59"/></g>
 <path d="M38 17 Q41 15 42 18 V27 H37Z" fill="#3267c0"/><path d="M37 22 H42 V26 H37Z" fill="#f1c21b"/>
 <path d="M68 46 Q71 43 74 46 V58 H68Z" fill="#3267c0"/><path d="M68 52 H74 V56 H68Z" fill="#f1c21b"/>
</svg>
<svg style="left:91px;top:623.2px" width="113" height="61">
 <g stroke="#b8b8b8" stroke-width="0.6"><path d="M17 3.5 H66 M17 6.5 H66 M17 9.5 H66 M17 12.5 H66 M17 15.5 H66 M17 18.5 H66 M17 21.5 H66 M17 24.5 H66 M17 27.5 H66 M17 30.5 H66 M17 33.5 H66 M17 36.5 H66 M17 39.5 H66 M17 42.5 H40"/></g>
 <rect x="82" y="0" width="26" height="34" fill="#d4c3a1"/>
 <path d="M86 5 H104 M87 8 H103 M90 14 H100" stroke="#8a7a60" stroke-width="0.6"/>
 <defs><linearGradient id="mar" x1="0" y1="0" x2="0" y2="1"><stop offset="0" stop-color="#a46070"/><stop offset="1" stop-color="#6b1a32"/></linearGradient></defs>
 <rect x="84.5" y="34" width="20" height="27" fill="url(#mar)"/>
</svg>
<svg style="left:91px;top:707.6px" width="113" height="34">
 <path d="M8 8 Q22 2 36 8" stroke="#d8d0d0" fill="none" stroke-width="2"/>
 <path d="M3 34 V16 Q6 12 10 14 Q16 8 22 9 Q28 8 34 14 Q37 12 38 16 V34 H31 V26 Q22 16 11 26 V34Z" fill="#7a7a7a"/>
 <path d="M4 20 H10 M31 20 H37 M14 13 Q22 10 30 13" stroke="#3a3a3a" stroke-width="1.6" fill="none"/>
 <rect x="3" y="26" width="7" height="8" fill="#333"/><rect x="31" y="26" width="7" height="8" fill="#333"/>
 <path d="M12 32 H30" stroke="#777" stroke-width="0.8" stroke-dasharray="1 1"/>
 <g stroke="#a8a8a8" stroke-width="0.8"><path d="M40 3 H102 M40 7.5 H98 M40 11.5 H101 M40 16.5 H90 M40 20.5 H88 M40 25 H99 M40 29.5 H97"/></g>
</svg>
<div class="a" style="left:356px;top:283px;width:738.5px;height:414.5px;background:#4472c4"></div>
<div class="a" style="left:369.5px;top:297.5px;width:710.5px;height:387px;background:#fff"></div>
<div class="a" style="left:1208px;top:275.5px;width:12.5px;height:436px;background:#dcdadc"></div>
<div class="a" style="left:1208px;top:275.5px;width:12px;height:12px;background:#fff;border:1px solid #cfcfcf"></div>
<svg style="left:1209.5px;top:277.5px" width="9" height="8"><path d="M1.5 5.5 L4.5 2.5 L7.5 5.5Z" fill="#666"/></svg>
<div class="a" style="left:1208px;top:498px;width:12px;height:18.5px;background:#fff;border:1px solid #bdbdbd"></div>
<div class="a" style="left:1208.5px;top:652px;width:11px;height:11px;background:#fff;border:1px solid #cfcfcf"></div>
<svg style="left:1209.5px;top:653.5px" width="9" height="8"><path d="M1.5 2.5 L4.5 5.5 L7.5 2.5Z" fill="#666"/></svg>
<svg style="left:1208px;top:666px" width="12" height="30"><path d="M3 6 L6 3 L9 6Z M3 9.5 L6 6.5 L9 9.5Z" fill="#777"/><path d="M3 20 L6 23 L9 20Z M3 16.5 L6 19.5 L9 16.5Z" fill="#777"/></svg>
<div class="a" style="left:241.6px;top:711px;width:979.4px;height:1.5px;background:#cdcdcd"></div>
<div class="t" style="left:252.50px;top:720.14px;font-size:12px;color:#666;font-weight:normal;font-style:normal;transform:scaleX(1.008);transform-origin:0 0;-webkit-text-stroke:0.2px #666;">Нотатки до слайда</div>
<svg style="left:588.5px;top:306px" width="274" height="183" viewBox="0 0 274 183">
 <defs>
  <linearGradient id="pg306" x1="0" y1="0" x2="1" y2="0"><stop offset="0" stop-color="#f3dcc4"/><stop offset="0.15" stop-color="#f8e9da"/><stop offset="0.44" stop-color="#f5e3cf"/><stop offset="0.49" stop-color="#e9cba9"/><stop offset="0.54" stop-color="#f6e5d1"/><stop offset="0.85" stop-color="#f8e9da"/><stop offset="1" stop-color="#f0d6ba"/></linearGradient>
  <linearGradient id="ed306" x1="0" y1="0" x2="0" y2="1"><stop offset="0" stop-color="#f0c8a4"/><stop offset="0.3" stop-color="#e6a576"/><stop offset="1" stop-color="#dc8a58"/></linearGradient>
  <linearGradient id="fr306" x1="0" y1="0" x2="1" y2="0"><stop offset="0" stop-color="#e4e2ea"/><stop offset="0.3" stop-color="#dcd8e6"/><stop offset="0.42" stop-color="#c8ccd8"/><stop offset="0.5" stop-color="#a8bde0"/><stop offset="1" stop-color="#5a98e8"/></linearGradient>
  <linearGradient id="fs306" x1="0" y1="0" x2="0" y2="1"><stop offset="0" stop-color="#5a98e6"/><stop offset="0.55" stop-color="#a9c0e4"/><stop offset="0.8" stop-color="#f3e07a"/><stop offset="1" stop-color="#f2d955"/></linearGradient>
 </defs>
 <rect x="0" y="0" width="274" height="183" fill="#fdfcfb"/>
 <rect x="0" y="0" width="274" height="3.5" fill="url(#fr306)"/>
 <rect x="271" y="0" width="3" height="183" fill="url(#fs306)"/>
 <rect x="0" y="0" width="1.2" height="183" fill="#ecebd9"/>
 <g transform="translate(0 -4.5)">
 <path d="M15 31 V173 C50 168 90 164 135 172 C180 164 220 168 257.5 173 V31Z" fill="#3a2d8c"/>
 <path d="M17 159 C60 159 100 159 135 166 C170 159 210 159 255.5 159 V166 C210 164 170 164 135 171 C100 164 60 164 17 168Z" fill="#5a4cb4"/>
 <path d="M17 134 C80 134 115 138 135 149 C155 138 190 134 255.5 134 V159 C210 159 160 159 135 166 C110 159 60 159 17 159Z" fill="url(#ed306)"/>
 <path d="M17 139 C80 139 115 142 135 152 C155 142 190 139 255.5 139 M17 144 C80 144 115 146 135 155 C155 146 190 144 255.5 144 M17 149 C80 149 115 150 135 158 C155 150 190 149 255.5 149 M17 154 C80 154 115 155 135 162 C155 155 190 154 255.5 154" stroke="#f0bd94" stroke-width="0.9" fill="none" opacity="0.8"/>
 <path d="M16 22 Q70 3 134 27 Q200 3 255.5 22 V134 C190 134 155 138 135 149 C115 138 80 134 16 134Z" fill="url(#pg306)"/>
 <path d="M16 22 Q70 3 134 27 Q200 3 255.5 22" stroke="#e9cdae" stroke-width="1.6" fill="none"/>
 <rect x="124" y="149.8" width="22" height="23.2" rx="11" fill="#2e2478"/>
 <path d="M129 155 Q135 152 141 155 V170 H129Z" fill="#3b3090"/>
 </g>
</svg>
<svg style="left:588.5px;top:490px" width="274" height="186" viewBox="0 0 274 186">
 <defs>
  <linearGradient id="pg490" x1="0" y1="0" x2="1" y2="0"><stop offset="0" stop-color="#f3dcc4"/><stop offset="0.15" stop-color="#f8e9da"/><stop offset="0.44" stop-color="#f5e3cf"/><stop offset="0.49" stop-color="#e9cba9"/><stop offset="0.54" stop-color="#f6e5d1"/><stop offset="0.85" stop-color="#f8e9da"/><stop offset="1" stop-color="#f0d6ba"/></linearGradient>
  <linearGradient id="ed490" x1="0" y1="0" x2="0" y2="1"><stop offset="0" stop-color="#f0c8a4"/><stop offset="0.3" stop-color="#e6a576"/><stop offset="1" stop-color="#dc8a58"/></linearGradient>
  <linearGradient id="fr490" x1="0" y1="0" x2="1" y2="0"><stop offset="0" stop-color="#e4e2ea"/><stop offset="0.3" stop-color="#dcd8e6"/><stop offset="0.42" stop-color="#c8ccd8"/><stop offset="0.5" stop-color="#a8bde0"/><stop offset="1" stop-color="#5a98e8"/></linearGradient>
  <linearGradient id="fs490" x1="0" y1="0" x2="0" y2="1"><stop offset="0" stop-color="#5a98e6"/><stop offset="0.55" stop-color="#a9c0e4"/><stop offset="0.8" stop-color="#f3e07a"/><stop offset="1" stop-color="#f2d955"/></linearGradient>
 </defs>
 <rect x="0" y="0" width="274" height="186" fill="#fdfcfb"/>
 <rect x="0" y="0" width="274" height="3.5" fill="url(#fr490)"/>
 <rect x="271" y="0" width="3" height="186" fill="url(#fs490)"/>
 <rect x="0" y="0" width="1.2" height="186" fill="#ecebd9"/>
 <g transform="translate(0 0)">
 <path d="M15 31 V173 C50 168 90 164 135 172 C180 164 220 168 257.5 173 V31Z" fill="#3a2d8c"/>
 <path d="M17 159 C60 159 100 159 135 166 C170 159 210 159 255.5 159 V166 C210 164 170 164 135 171 C100 164 60 164 17 168Z" fill="#5a4cb4"/>
 <path d="M17 134 C80 134 115 138 135 149 C155 138 190 134 255.5 134 V159 C210 159 160 159 135 166 C110 159 60 159 17 159Z" fill="url(#ed490)"/>
 <path d="M17 139 C80 139 115 142 135 152 C155 142 190 139 255.5 139 M17 144 C80 144 115 146 135 155 C155 146 190 144 255.5 144 M17 149 C80 149 115 150 135 158 C155 150 190 149 255.5 149 M17 154 C80 154 115 155 135 162 C155 155 190 154 255.5 154" stroke="#f0bd94" stroke-width="0.9" fill="none" opacity="0.8"/>
 <path d="M16 22 Q70 3 134 27 Q200 3 255.5 22 V134 C190 134 155 138 135 149 C115 138 80 134 16 134Z" fill="url(#pg490)"/>
 <path d="M16 22 Q70 3 134 27 Q200 3 255.5 22" stroke="#e9cdae" stroke-width="1.6" fill="none"/>
 <rect x="124" y="149.8" width="22" height="23.2" rx="11" fill="#2e2478"/>
 <path d="M129 155 Q135 152 141 155 V170 H129Z" fill="#3b3090"/>
 </g>
</svg>
<div class="t" style="left:611.60px;top:332.32px;font-size:13.8px;color:#d42a36;font-weight:bold;font-style:normal;transform:scaleX(0.723);transform-origin:0 0;-webkit-text-stroke:0.35px #d42a36;">МОВА – ДУХОВНЕ БАГАТСТВО НАРОДУ. ЩОБ</div>
<div class="t" style="left:640.00px;top:346.62px;font-size:13.8px;color:#d42a36;font-weight:bold;font-style:normal;transform:scaleX(0.744);transform-origin:0 0;-webkit-text-stroke:0.35px #d42a36;">ЛЮБИТИ – ТРЕБА ЗНАТИ, А ЩОБ</div>
<div class="t" style="left:614.70px;top:361.12px;font-size:13.8px;color:#d42a36;font-weight:bold;font-style:normal;transform:scaleX(0.738);transform-origin:0 0;-webkit-text-stroke:0.35px #d42a36;">ПРОНИКНУТИ В ТАКУ ТОНКУ Й НЕОСЯЖНУ,</div>
<div class="t" style="left:618.30px;top:375.22px;font-size:13.8px;color:#d42a36;font-weight:bold;font-style:normal;transform:scaleX(0.719);transform-origin:0 0;-webkit-text-stroke:0.35px #d42a36;">ВЕЛИЧНУ Й БАГАТОГРАННУ РІЧ, ЯК МОВА,</div>
<div class="t" style="left:676.00px;top:389.82px;font-size:13.8px;color:#d42a36;font-weight:bold;font-style:normal;transform:scaleX(0.718);transform-origin:0 0;-webkit-text-stroke:0.35px #d42a36;">ТРЕБА ЇЇ ЛЮБИТИ.</div>
<div class="t" style="left:629.70px;top:522.41px;font-size:14.4px;color:#d42a36;font-weight:bold;font-style:normal;transform:scaleX(0.811);transform-origin:0 0;-webkit-text-stroke:0.35px #d42a36;">НУ ЩО Б ЗДАВАЛОСЯ, СЛОВА...</div>
<div class="t" style="left:614.70px;top:539.61px;font-size:14.4px;color:#d42a36;font-weight:bold;font-style:normal;transform:scaleX(0.812);transform-origin:0 0;-webkit-text-stroke:0.35px #d42a36;">СЛОВА ТА ГОЛОС – БІЛЬШ НІЧОГО. А</div>
<div class="t" style="left:630.00px;top:556.31px;font-size:14.4px;color:#d42a36;font-weight:bold;font-style:normal;transform:scaleX(0.799);transform-origin:0 0;-webkit-text-stroke:0.35px #d42a36;">СЕРЦЕ Б"ЄТЬСЯ – ОЖИВА, ЯК ЇХ</div>
<div class="t" style="left:698.00px;top:574.01px;font-size:14.4px;color:#d42a36;font-weight:bold;font-style:normal;transform:scaleX(0.731);transform-origin:0 0;-webkit-text-stroke:0.35px #d42a36;">ПОЧУЄ!..</div>
<div class="t" style="left:667.51px;top:419.42px;font-size:12.5px;color:#222;font-weight:bold;font-style:italic;transform:scaleX(0.878);transform-origin:0 0;font-family:'Liberation Serif',serif;">Василь Сухомлинський</div>
<div class="t" style="left:683.30px;top:605.07px;font-size:13.5px;color:#222;font-weight:bold;font-style:italic;transform:scaleX(0.852);transform-origin:0 0;font-family:'Liberation Serif',serif;">Тарас Шевченко</div>
<svg style="left:0;top:0" width="1280" height="800">
 <path d="M604 416 Q598 410 600 404 Q604 402 606 408 L610 420Z" fill="#fde3cf"/>
 <path d="M600 430 Q603 420 610 432 L608 446 L602 444Z" fill="#2a5fb8"/>
 <path d="M609 406 Q616 400 628 402 Q644 405 646 420 Q647 430 642 434 Q640 420 636 414 Q626 410 614 414 Q608 420 608 434 Q602 428 604 418 Q604 410 609 406Z" fill="#e7c372"/>
 <ellipse cx="625" cy="424" rx="13.5" ry="12" fill="#fde6d4"/>
 <path d="M611 418 Q616 408 628 408 Q640 409 642 420 Q636 413 627 413 Q616 413 611 422Z" fill="#ddb35e"/>
 <circle cx="611" cy="410" r="3.6" fill="#d7262f"/>
 <ellipse cx="619.5" cy="424" rx="1.6" ry="2" fill="#6a7fa0"/><ellipse cx="630.5" cy="424" rx="1.6" ry="2" fill="#6a7fa0"/>
 <path d="M622 430 Q625 432.5 628 430" stroke="#d9706a" fill="none" stroke-width="0.9"/>
 <path d="M610 432 Q625 428 640 432 L648 446 L643 450 L640 446 L641 454 H609 L610 446 Q606 446 604 440Z" fill="#1f5fbd"/>
 <path d="M621 432 H629 V446 H621Z" fill="#bcd7f2" opacity="0.85"/>
 <path d="M642 446 Q648 449 651 455" stroke="#fde3cf" stroke-width="3" fill="none"/>
 <path d="M609 453 Q626 449 643 453 Q650 464 645 472 Q626 477 607 472 Q602 464 609 453Z" fill="#f6c61a"/>
 <path d="M620 474 V485 M636 474 V485" stroke="#fbe9da" stroke-width="3.2"/>
 <ellipse cx="620" cy="486.5" rx="4.5" ry="2.5" fill="#eec23a"/><ellipse cx="637" cy="486.5" rx="4.5" ry="2.5" fill="#eec23a"/>
</svg>
<svg style="left:0;top:0" width="1280" height="800">
 <path d="M834 626 Q840 616 843 608 Q846 602 848 606 Q848 614 840 630Z" fill="#fde3cf"/>
 <ellipse cx="821" cy="610" rx="16.5" ry="13.5" fill="#fde6d4"/>
 <path d="M800 607 Q797 596 803 590 Q806 583 815 583 Q822 580 830 583 Q840 585 843 594 Q845 602 841 608 Q838 598 830 597 Q820 594 810 598 Q804 601 803 609Z" fill="#d9ad66"/>
 <g fill="#cfa055"><circle cx="806" cy="588" r="3"/><circle cx="814" cy="584" r="3"/><circle cx="823" cy="583" r="3"/><circle cx="832" cy="585" r="3"/><circle cx="839" cy="590" r="3"/></g>
 <ellipse cx="813" cy="610.4" rx="1.8" ry="2.3" fill="#3a3a44"/><ellipse cx="825.4" cy="610.4" rx="1.8" ry="2.3" fill="#3a3a44"/>
 <path d="M816 616.5 Q820 620.5 824 616.5Z" fill="#d96060"/>
 <path d="M810 622 Q822 619 834 622 L837 634 L833 636 L834 643.5 H809.5 L810 635 L806 634Z" fill="#1f5fbd"/>
 <path d="M818 622 H825 L823.5 631 H819.5Z" fill="#f1e08a"/>
 <path d="M809.5 643 H833.5 L834 656 H823 L821.5 651 L820 656 H808.5Z" fill="#f6c61a"/>
 <path d="M815 656 V667 M828 656 V667" stroke="#fbe9da" stroke-width="3.5"/>
 <ellipse cx="818" cy="671.5" rx="6" ry="3.6" fill="#f0c43a"/><ellipse cx="828" cy="671.5" rx="5.5" ry="3.6" fill="#f0c43a"/>
</svg>
<svg style="left:572px;top:456px" width="12" height="16"><path d="M3 1.5 H9 M6 1.5 V13.5 M3 13.5 H9" stroke="#222" stroke-width="1.1" fill="none"/></svg>
<div class="a" style="left:58px;top:741px;width:1163px;height:18px;background:#f2f2f2"></div>
<div class="a" style="left:58px;top:740.5px;width:1163px;height:1px;background:#d9d9d9"></div>
<div class="a" style="left:58px;top:759px;width:1163px;height:1px;background:#3a3a3a"></div>
<div class="t" style="left:65.00px;top:743.91px;font-size:10.5px;color:#505050;font-weight:normal;font-style:normal;transform:scaleX(0.868);transform-origin:0 0;-webkit-text-stroke:0.2px #505050;">Слайд 12 з 19</div>
<svg style="left:139px;top:744px" width="16" height="12"><path d="M1.5 1.5 H6 Q7.5 1.5 7.5 3 V10.5 Q7.5 9 6 9 H1.5Z M7.5 3 Q7.5 1.5 9 1.5 H13.5 V9 H9 Q7.5 9 7.5 10.5" stroke="#777" fill="none" stroke-width="0.9"/><path d="M9.5 8 L13.5 3" stroke="#777" stroke-width="1.2"/></svg>
<div class="t" style="left:166.60px;top:743.91px;font-size:10.5px;color:#404040;font-weight:bold;font-style:normal;transform:scaleX(0.862);transform-origin:0 0;">українська</div>
<svg style="left:785px;top:743px" width="14" height="14"><path d="M2 7 H11 M2 9.5 H11 M3 12 H10" stroke="#666" stroke-width="1"/><path d="M4 5 L6.5 2.5 L9 5Z" fill="#666"/></svg>
<div class="t" style="left:801.00px;top:744.71px;font-size:10.5px;color:#505050;font-weight:bold;font-style:normal;transform:scaleX(0.880);transform-origin:0 0;">Нотатки</div>
<svg style="left:853px;top:743px" width="16" height="14"><path d="M2 1.5 H13.5 V9 H7 L4 12 V9 H2Z" fill="#5a5a5a"/></svg>
<div class="t" style="left:869.70px;top:744.71px;font-size:10.5px;color:#505050;font-weight:bold;font-style:normal;transform:scaleX(0.897);transform-origin:0 0;">Примітки</div>
<div class="a" style="left:929.5px;top:741px;width:31.3px;height:18px;background:#d4d4d4"></div>
<svg style="left:936px;top:742px" width="290" height="16">
 <g fill="none" stroke="#6a6a6a" stroke-width="1">
  <rect x="3.5" y="2.5" width="12.5" height="11"/><path d="M6.5 2.5 V13.5"/><rect x="9" y="4.5" width="5" height="3"/><path d="M6.5 10.5 H16"/>
  <rect x="36" y="3" width="5" height="3.5"/><rect x="43" y="3" width="5" height="3.5"/><rect x="36" y="9" width="5" height="3.5"/><rect x="43" y="9" width="5" height="3.5"/>
  <path d="M68.5 3 H79 V13.5 H68.5Z M73.7 3 V13.5 M70 5.5 H72.5 M70 7.5 H72.5 M70 9.5 H72.5 M75.5 5.5 H77.5 M75.5 7.5 H77.5 M75.5 9.5 H77.5"/>
  <path d="M100.5 3 H111.5 M101.5 3 V9 H110.5 V3 M106 9 V12.5 M103.5 13 H108.5"/>
 </g>
 <path d="M127 8.5 H132" stroke="#555" stroke-width="1.6"/>
 <path d="M136 8.5 H220" stroke="#aaa" stroke-width="1"/>
 <path d="M178.6 6 V11" stroke="#999" stroke-width="0.8"/>
 <rect x="162" y="3" width="4" height="10.5" fill="#555"/>
 <path d="M224 8.5 H229.5 M226.75 5.75 V11.25" stroke="#555" stroke-width="1.6"/>
 <g fill="none" stroke="#777" stroke-width="1"><rect x="269.5" y="3" width="10.5" height="10.5"/><path d="M271.5 5 L274 7.5 M278 5 L275.5 7.5 M271.5 11.5 L274 9 M278 11.5 L275.5 9"/></g>
</svg>
<div class="t" style="left:1174.70px;top:744.11px;font-size:10.5px;color:#505050;font-weight:normal;font-style:normal;transform:scaleX(0.824);transform-origin:0 0;-webkit-text-stroke:0.2px #505050;">68%</div>
<div class="a" style="left:0;top:760px;width:1280px;height:40px;background:linear-gradient(90deg,#dcdbdd 0%,#dad9dc 50%,#dedad9 100%)"></div>
<div class="a" style="left:0;top:760px;width:1280px;height:1px;background:#cfcfd1"></div>
<svg style="left:0;top:760px" width="300" height="40">
 <defs>
  <linearGradient id="win" x1="0" y1="0" x2="1" y2="1"><stop offset="0" stop-color="#29b3f3"/><stop offset="1" stop-color="#0a6bd2"/></linearGradient>
  <linearGradient id="cop" x1="0" y1="0" x2="1" y2="1"><stop offset="0" stop-color="#2f8df0"/><stop offset="0.35" stop-color="#4fd07a"/><stop offset="0.6" stop-color="#f08a3a"/><stop offset="1" stop-color="#d04fe0"/></linearGradient>
  <linearGradient id="cop2" x1="0" y1="0" x2="1" y2="1"><stop offset="0" stop-color="#f2a03a"/><stop offset="0.5" stop-color="#ee5a8a"/><stop offset="1" stop-color="#b64ee0"/></linearGradient>
  <linearGradient id="edg" x1="1" y1="0" x2="0" y2="1"><stop offset="0" stop-color="#5fd46a"/><stop offset="0.4" stop-color="#1f9ee0"/><stop offset="1" stop-color="#0b52b0"/></linearGradient>
  <linearGradient id="wrd" x1="0" y1="0" x2="0" y2="1"><stop offset="0" stop-color="#41a5ee"/><stop offset="1" stop-color="#1d56b8"/></linearGradient>
  <linearGradient id="xl" x1="0" y1="0" x2="0" y2="1"><stop offset="0" stop-color="#33c481"/><stop offset="1" stop-color="#107c41"/></linearGradient>
 </defs>
 <rect x="17.3" y="10.6" width="9.4" height="9.4" fill="url(#win)"/><rect x="27.5" y="10.6" width="9.4" height="9.4" fill="url(#win)"/>
 <rect x="17.3" y="20.8" width="9.4" height="9.4" fill="url(#win)"/><rect x="27.5" y="20.8" width="9.4" height="9.4" fill="url(#win)"/>
 <path d="M58 13 Q60 10 64 10 H68 Q70 10 70 12 L66 24 Q65 26 62 26 H58 Q55 26 56 23Z" fill="url(#cop)"/>
 <path d="M72 27 Q70 30 66 30 H62 Q60 30 60 28 L64 16 Q65 14 68 14 H72 Q75 14 74 17Z" fill="url(#cop2)"/>
 <rect x="95.5" y="10.5" width="15" height="19" rx="1.5" fill="url(#xl)"/>
 <rect x="91.2" y="14.5" width="10" height="10.5" rx="1" fill="#107c41"/>
 <text x="93.3" y="23.2" font-size="8.5" font-weight="bold" fill="#fff" font-family="Liberation Sans">X</text>
 <circle cx="137.8" cy="20" r="10.2" fill="#f5701f"/>
 <path d="M131 23 Q138 18 145 11 M132 26 Q140 22 146 15 M134 28 Q141 26 146.5 19" stroke="#fff" stroke-width="2" fill="none"/>
 <circle cx="174.7" cy="20" r="10.2" fill="url(#edg)"/>
 <path d="M165 19 Q167 10 176 10 Q184 10 185 17 Q182 13 176 14 Q170 15 169 21 Q168 26 172 28 Q166 27 165 19Z" fill="#54d6a0" opacity="0.7"/>
 <ellipse cx="176.5" cy="21.5" rx="4.6" ry="3.6" fill="#eef6fb"/>
 <ellipse cx="177" cy="21" rx="2.6" ry="1.8" fill="#2a8ad8"/>
 <path d="M172 24 Q175 29 182 28 Q179 31 174 30.2Z" fill="#0c4fa8"/>
 <rect x="205.5" y="10.6" width="15.5" height="18.5" rx="1.5" fill="url(#wrd)"/>
 <rect x="201.2" y="14.5" width="10.5" height="10.5" rx="1" fill="#185abd"/>
 <text x="202" y="23" font-size="8" font-weight="bold" fill="#fff" font-family="Liberation Sans">W</text>
 <path d="M237.5 12.5 Q237.5 11 239 11 H245 L247 13 H256.5 Q258 13 258 14.5 V29 Q258 30 257 30 H238.5 Q237.5 30 237.5 29Z" fill="#f7cd45"/>
 <path d="M237.5 15.5 H258 V29 Q258 30 257 30 H238.5 Q237.5 30 237.5 29Z" fill="#fbd860"/>
 <rect x="242" y="24" width="11.5" height="4" fill="#2a7bd6"/>
 <circle cx="285" cy="20" r="10" fill="#e53935"/>
 <path d="M285 20 L276.3 15 A10 10 0 0 0 290 28.7Z" fill="#43a047"/>
 <path d="M285 20 L290 28.7 A10 10 0 0 0 293.7 15 L285 15Z" fill="#fbc02d"/>
 <circle cx="285" cy="20" r="4.6" fill="#fff"/><circle cx="285" cy="20" r="3.6" fill="#1e88e5"/>
 <rect x="282.5" y="34" width="4.5" height="1.6" rx="0.8" fill="#777"/>
</svg>
<div class="t" style="left:301.00px;top:775.47px;font-size:11.5px;color:#222;font-weight:normal;font-style:normal;transform:scaleX(0.852);transform-origin:0 0;">Курс: Українська літера</div>
<svg style="left:420px;top:760px" width="150" height="40">
 <defs><linearGradient id="zm" x1="0" y1="0" x2="0" y2="1"><stop offset="0" stop-color="#2d8cff"/><stop offset="1" stop-color="#0b5cff"/></linearGradient></defs>
 <rect x="4.5" y="9.5" width="20" height="20" rx="8" fill="url(#zm)"/>
 <text x="8.3" y="21.5" font-size="4.2" fill="#fff" font-family="Liberation Sans">zoom</text>
 <rect x="12" y="34" width="4.5" height="1.6" rx="0.8" fill="#777"/>
</svg>
<div class="t" style="left:451.00px;top:775.47px;font-size:11.5px;color:#222;font-weight:normal;font-style:normal;transform:scaleX(0.888);transform-origin:0 0;">Zoom Workplace</div>
<div class="a" style="left:539px;top:764px;width:105.6px;height:32.6px;background:#eeedef;border-radius:4px;border:1px solid #e3e2e4"></div>
<svg style="left:540px;top:760px" width="40" height="40">
 <defs><linearGradient id="zm2" x1="0" y1="0" x2="0" y2="1"><stop offset="0" stop-color="#2d8cff"/><stop offset="1" stop-color="#0b5cff"/></linearGradient></defs>
 <rect x="5.8" y="9.5" width="20" height="20" rx="8" fill="url(#zm2)"/>
 <text x="9.6" y="21.5" font-size="4.2" fill="#fff" font-family="Liberation Sans">zoom</text>
 <rect x="6" y="33.5" width="16" height="2.5" rx="1.2" fill="#1a6fd6"/>
</svg>
<div class="t" style="left:572.50px;top:775.47px;font-size:11.5px;color:#222;font-weight:normal;font-style:normal;transform:scaleX(0.891);transform-origin:0 0;">Zoom Meeting</div>
<svg style="left:1030px;top:760px" width="180" height="40">
 <path d="M5 23 L9.5 18.5 L14 23" stroke="#333" stroke-width="1.5" fill="none"/>
 <path d="M30 17 Q32 12 37 12 Q41 12 43 15 M43 12 V15.5 H39.5 M42 23 Q40 28 35 28 Q31 28 29 25 M29 28 V24.5 H32.5" stroke="#333" stroke-width="1.3" fill="none"/>
 <circle cx="39.5" cy="24.5" r="3.6" fill="#1c6fe0"/>
 <rect x="60.3" y="13" width="4.6" height="9" rx="2.3" fill="none" stroke="#2f66d0" stroke-width="1.2"/>
 <path d="M58.3 19 Q58.3 24.5 62.6 24.5 Q66.9 24.5 66.9 19 M62.6 24.5 V27.5" stroke="#2f66d0" stroke-width="1.1" fill="none"/>
 <path d="M121.5 19.5 Q126.5 15 131.5 19.5 M123.3 21.6 Q126.5 18.8 129.7 21.6 M125 23.5 Q126.5 22.3 128 23.5" stroke="#444" stroke-width="1.1" fill="none"/><circle cx="126.5" cy="25.2" r="0.9" fill="#222"/>
 <path d="M140 18 H142.5 L146 14.5 V25.5 L142.5 22 H140Z" fill="none" stroke="#222" stroke-width="1.1"/>
 <path d="M148 17 Q150 20 148 23 M150 15 Q153.5 20 150 25" stroke="#222" stroke-width="1.1" fill="none"/>
 <rect x="159.5" y="16" width="12" height="8" rx="1.5" fill="none" stroke="#222" stroke-width="1.2"/><rect x="161.5" y="18" width="4" height="4" fill="#222"/><rect x="172" y="18.5" width="1.5" height="3" fill="#222"/>
</svg>
<div class="t" style="left:1115.50px;top:775.41px;font-size:10.5px;color:#222;font-weight:normal;font-style:normal;transform:scaleX(0.920);transform-origin:0 0;">УКР</div>
<div class="t" style="left:1241.00px;top:767.89px;font-size:11px;color:#222;font-weight:normal;font-style:normal;transform:scaleX(0.824);transform-origin:0 0;">13:12</div>
<div class="t" style="left:1216.60px;top:781.19px;font-size:11px;color:#222;font-weight:normal;font-style:normal;transform:scaleX(0.856);transform-origin:0 0;">23.02.2026</div>
</body></html>
